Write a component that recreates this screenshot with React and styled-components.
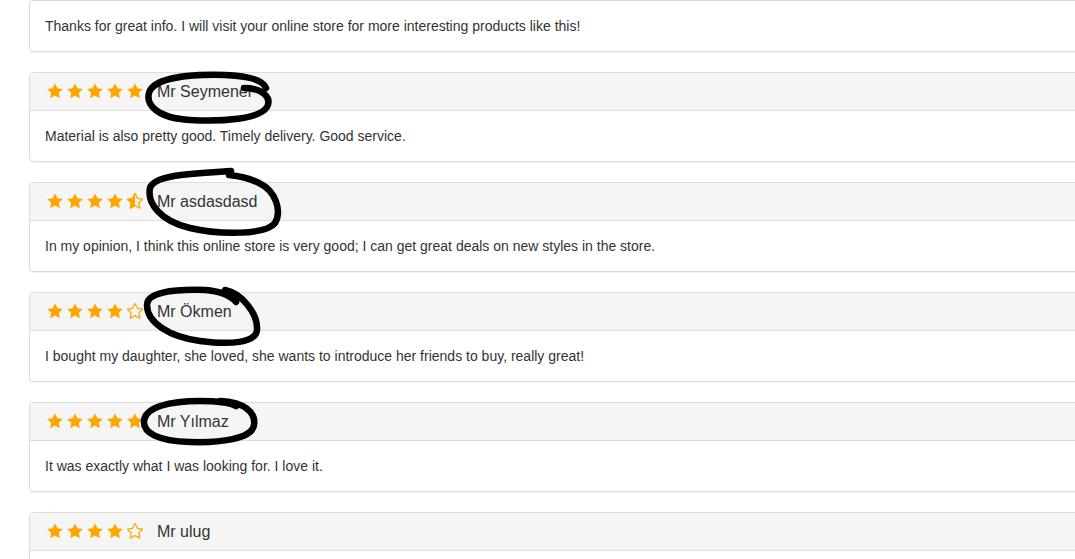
import React from "react";
import styled, { createGlobalStyle } from "styled-components";

const GlobalStyle = createGlobalStyle`
  html, body {
    margin: 0;
    padding: 0;
    background: #fff;
    overflow: hidden;
  }
  body {
    font-family: "Liberation Sans", Arial, Helvetica, sans-serif;
    font-size: 14px;
    color: #333;
  }
`;

const Page = styled.div`
  padding-left: 29px;
  width: 1200px;
`;

const Panel = styled.div`
  position: relative;
  width: 1100px;
  margin-bottom: 20px;
  border: 1px solid #ddd;
  border-radius: 4px;
  background: #fff;
  box-shadow: 0 1px 1px rgba(0, 0, 0, 0.05);
`;

const Heading = styled.div`
  height: 38px;
  box-sizing: border-box;
  display: flex;
  align-items: center;
  padding: 0 15px 0 17px;
  background: #f5f5f5;
  border-bottom: 1px solid #ddd;
  border-radius: 3px 3px 0 0;
`;

const Stars = styled.div`
  display: flex;
  gap: 4px;
  margin-top: -1px;
`;

const StarIcon = styled.svg`
  width: 16px;
  height: 16px;
  display: block;
`;

const Name = styled.h3`
  margin: 0 0 0 14px;
  font-size: 16px;
  font-weight: 400;
  line-height: 18px;
  color: #333;
`;

const Body = styled.div`
  height: 50px;
  box-sizing: border-box;
  display: flex;
  align-items: center;
  padding: 0 15px;
  line-height: 20px;
`;

const Scribble = styled.svg`
  position: absolute;
  left: 0;
  top: 0;
  width: 300px;
  height: 60px;
  overflow: visible;
  pointer-events: none;
`;

const ScribblePath = styled.path`
  fill: none;
  stroke: #000;
  stroke-width: 6.5px;
  stroke-linecap: round;
  stroke-linejoin: round;
`;

const STAR =
  "8,0.4 10.5,5.3 15.8,6.1 11.9,9.8 12.8,15.2 8,12.6 3.2,15.2 4.1,9.8 0.2,6.1 5.5,5.3";
const HALF = "8,0.4 8,12.6 3.2,15.2 4.1,9.8 0.2,6.1 5.5,5.3";
const ORANGE = "#ffa500";

function Star({ kind }) {
  return (
    <StarIcon viewBox="0 0 16 16">
      {kind === "full" && <polygon points={STAR} fill={ORANGE} />}
      {kind === "half" && (
        <>
          <polygon points={HALF} fill={ORANGE} />
          <polygon points={STAR} fill="none" stroke={ORANGE} strokeWidth="1.3" strokeLinejoin="round" />
        </>
      )}
      {kind === "empty" && (
        <polygon points={STAR} fill="none" stroke={ORANGE} strokeWidth="1.2" strokeLinejoin="round" />
      )}
    </StarIcon>
  );
}

function Rating({ value }) {
  const list = [];
  for (let i = 1; i <= 5; i++) {
    if (value >= i) list.push("full");
    else if (value >= i - 0.5) list.push("half");
    else list.push("empty");
  }
  return (
    <Stars>
      {list.map((k, i) => (
        <Star key={i} kind={k} />
      ))}
    </Stars>
  );
}

const reviews = [
  {
    name: "Mr Seymenel",
    rating: 5,
    text: "Material is also pretty good. Timely delivery. Good service.",
    scribble:
      "M 214 15 C 233 15, 242 25, 237 34 C 230 46, 192 49, 160 47 C 126 45, 116 31, 119 20 C 123 5, 158 1, 195 2 C 219 3, 233 7, 236 15",
  },
  {
    name: "Mr asdasdasd",
    rating: 4.5,
    text: "In my opinion, I think this online store is very good; I can get great deals on new styles in the store.",
    scribble:
      "M 201 -12 C 170 -10, 124 -9, 120 5 C 117 20, 130 38, 160 45 C 190 52, 236 52, 245 40 C 252 28, 246 8, 229 0 C 221 -4, 210 -7, 199 -8",
  },
  {
    name: "Mr Ökmen",
    rating: 4,
    text: "I bought my daughter, she loved, she wants to introduce her friends to buy, really great!",
    scribble:
      "M 195 -3 C 211 0, 228 20, 227 37 C 226 50, 200 52, 170 48 C 140 44, 117 30, 117 12 C 117 0, 140 -4, 175 -3 C 190 -2, 200 2, 206 9",
  },
  {
    name: "Mr Yılmaz",
    rating: 5,
    text: "It was exactly what I was looking for. I love it.",
    scribble:
      "M 190 -2 C 215 -1, 226 10, 224 22 C 222 36, 190 40, 160 39 C 128 38, 113 30, 114 18 C 115 4, 140 -2, 170 -2 C 185 -2, 200 0, 206 3",
  },
  {
    name: "Mr ulug",
    rating: 4,
    text: "",
  },
];

function Review({ review }) {
  return (
    <Panel>
      <Heading>
        <Rating value={review.rating} />
        <Name>{review.name}</Name>
      </Heading>
      <Body>{review.text}</Body>
      {review.scribble && (
        <Scribble viewBox="0 0 300 60">
          <ScribblePath d={review.scribble} />
        </Scribble>
      )}
    </Panel>
  );
}

export default function App() {
  return (
    <>
      <GlobalStyle />
      <Page>
        <Panel>
          <Body>Thanks for great info. I will visit your online store for more interesting products like this!</Body>
        </Panel>
        {reviews.map((r) => (
          <Review key={r.name} review={r} />
        ))}
      </Page>
    </>
  );
}
